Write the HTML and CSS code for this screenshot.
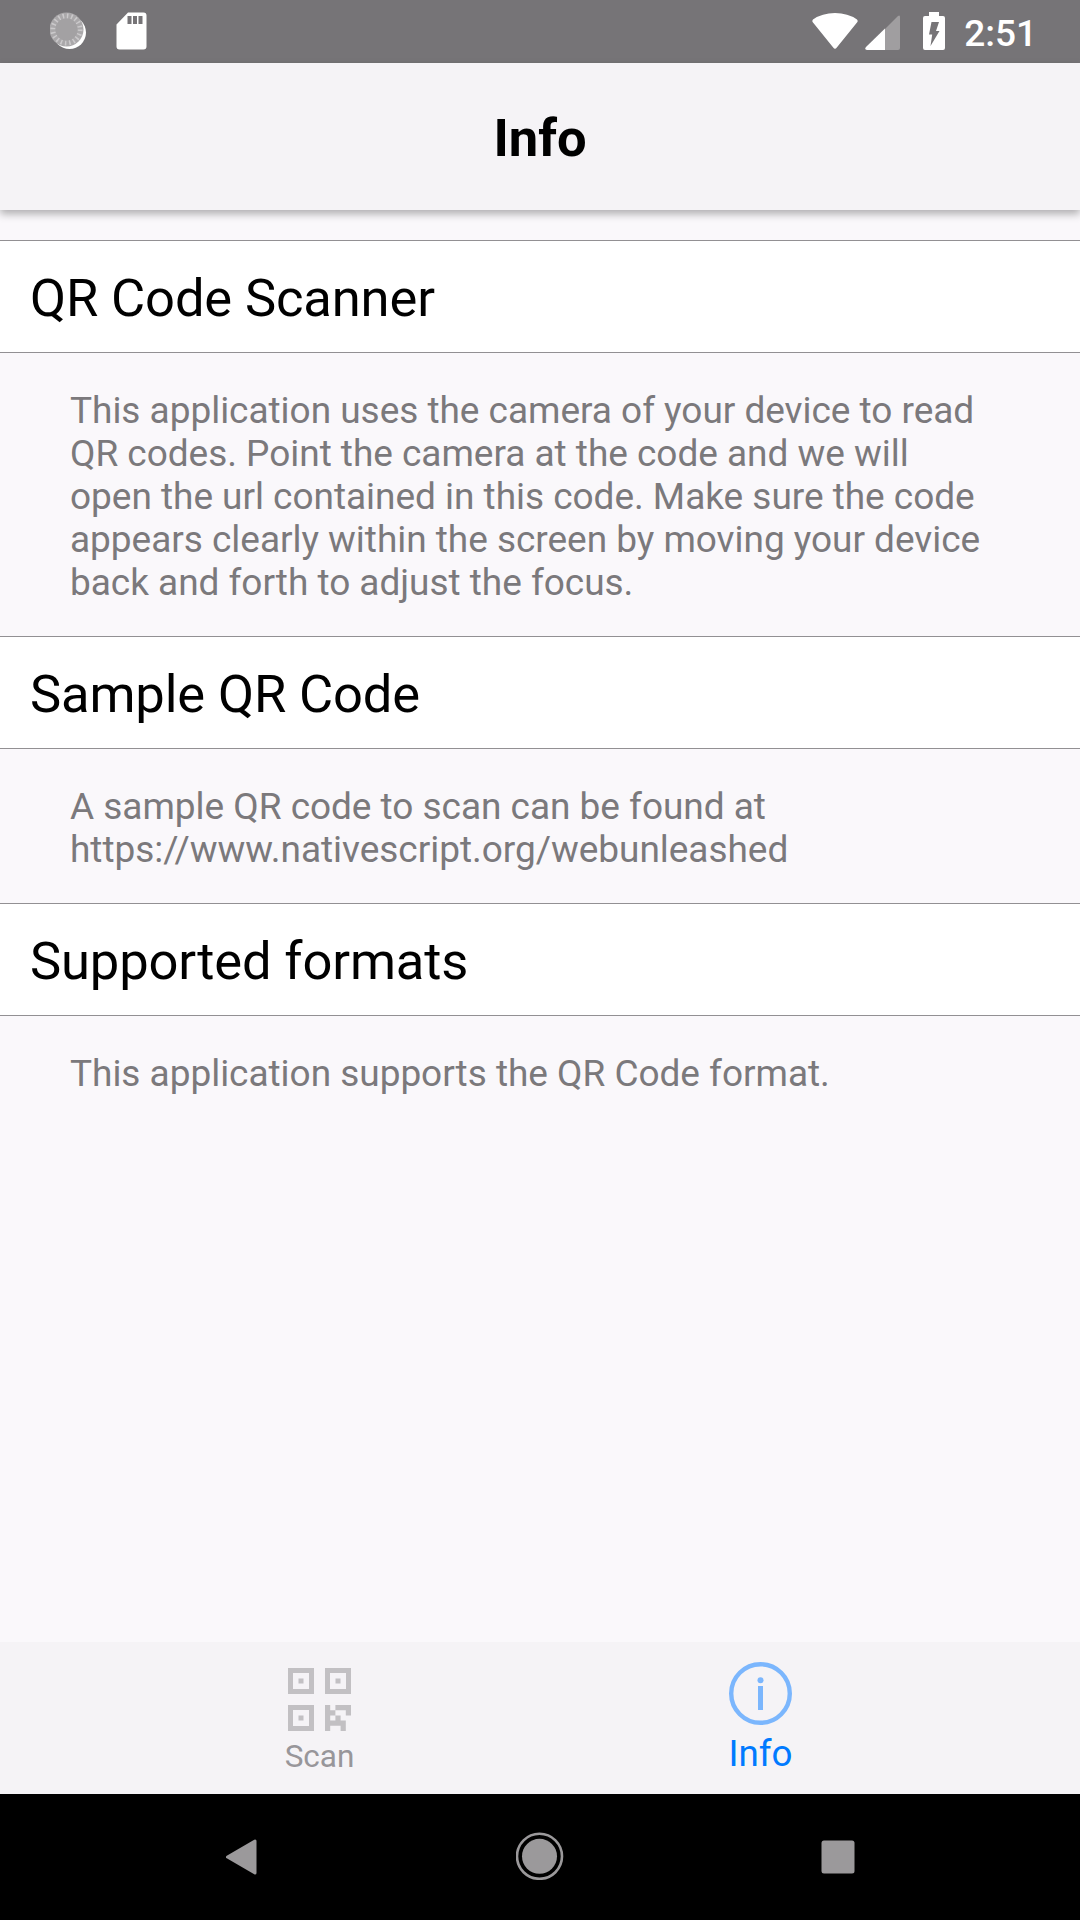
FILE: index.html
```html
<!DOCTYPE html>
<html lang="en">
<head>
  <meta charset="UTF-8">
  <meta name="viewport" content="width=device-width, initial-scale=1.0">
  <title>Info</title>
  <link rel="stylesheet" href="styles.css">
</head>
<body>

<!-- Status bar -->
<div class="status-bar">
  <div class="status-left">
    <svg width="38" height="38" viewBox="0 0 38 38">
      <circle cx="19.500" cy="20.500" r="16.500" fill="#fff"/>
      <circle cx="16.500" cy="17.500" r="17" fill="#aaa8aa"/>
      <circle cx="16.500" cy="17.500" r="13.600" fill="none" stroke="#cbc9cb" stroke-width="5" stroke-dasharray="1.5 2.77"/>
      <circle cx="16.500" cy="17.500" r="11" fill="#a3a1a3"/>
    </svg>
    <svg width="31" height="38" viewBox="0 0 31 38">
      <path d="M12 .5h15.500a3 3 0 0 1 3 3v31a3 3 0 0 1-3 3H3.500a3 3 0 0 1-3-3V12.500z" fill="#fff"/>
      <path d="M11.500 4h4v8h-4zM17 4h4v8h-4zM22.500 4h4v8h-4z" fill="#767477"/>
    </svg>
  </div>
  <div class="status-right">
    <svg class="wifi" width="46" height="38" viewBox="0 0 46 38">
      <path d="M1 7.500Q10 1 23 1t22 6.500q1.200 1.300.2 2.800L24.800 35.500q-1.800 2.400-3.600 0L.8 10.300Q-.2 8.800 1 7.500z" fill="#fff"/>
    </svg>
    <svg class="signal" width="35" height="38" viewBox="0 0 35 38">
      <path d="M20 17L33 4q2-1.500 2 1v31q0 2-2 2H20z" fill="#a09ea0"/>
      <path d="M20 16.500V38H2q-3-.5-1-3z" fill="#fff"/>
    </svg>
    <svg class="battery" width="22" height="38" viewBox="0 0 22 38">
      <path d="M6 0h10v4h4q2 0 2 2v30q0 2-2 2H2q-2 0-2-2V6q0-2 2-2h4z" fill="#fff"/>
      <path d="M8.500 10h7.500l-3 9h3.500L7.500 34l1.700-11.500H6z" fill="#767477"/>
    </svg>
    <span class="clock">2:51</span>
  </div>
</div>

<header class="action-bar">
  <h1>Info</h1>
</header>

<main class="content">
  <h2 class="section-title">QR Code Scanner</h2>
  <p class="section-text">This application uses the camera of your device to read QR codes. Point the camera at the code and we will open the url contained in this code. Make sure the code appears clearly within the screen by moving your device back and forth to adjust the focus.</p>
  <h2 class="section-title">Sample QR Code</h2>
  <p class="section-text">A sample QR code to scan can be found at https://www.nativescript.org/webunleashed</p>
  <h2 class="section-title">Supported formats</h2>
  <p class="section-text">This application supports the QR Code format.</p>
</main>

<!-- Tabs -->
<nav class="tab-bar">
  <a class="tab">
    <svg class="tab-icon" width="63" height="63" viewBox="0 0 63 63">
      <g fill="none" stroke="#c2c0c3" stroke-width="5">
        <path d="M2.500 2.500h21v21h-21zM39.500 2.500h21v21h-21zM2.500 39.500h21v21h-21z"/>
      </g>
      <g fill="#c2c0c3">
        <path d="M10.500 10.500h5v5h-5zM47.500 10.500h5v5h-5zM10.500 47.500h5v5h-5z"/>
        <path d="M37 37h5.200v5.200h5.200v5.200h-5.200v5.200h5.200v-5.200h5.200v5.200h5.200V63h-5.200v-5.200H42.200V63H37zM47.400 37H63v10.400h-5.200v-5.200H47.400z"/>
      </g>
    </svg>
    <span class="tab-label">Scan</span>
  </a>
  <a class="tab active">
    <svg class="tab-icon" width="63" height="63" viewBox="0 0 63 63">
      <circle cx="31.500" cy="31.500" r="29.300" fill="none" stroke="#7bb6fd" stroke-width="4.400"/>
      <circle cx="31.500" cy="18.300" r="3" fill="#7bb6fd"/>
      <path d="M29 24h5v24h-5z" fill="#7bb6fd"/>
    </svg>
    <span class="tab-label">Info</span>
  </a>
</nav>

<!-- System navigation -->
<div class="system-nav">
  <svg width="48" height="48" viewBox="0 0 48 48">
    <path d="M9.500 25L37 9V41z" fill="#9b999b" stroke="#9b999b" stroke-width="3" stroke-linejoin="round"/>
  </svg>
  <svg width="48" height="48" viewBox="0 0 48 48">
    <circle cx="23.500" cy="24.300" r="22.500" fill="none" stroke="#9b999b" stroke-width="2.600"/>
    <circle cx="23.500" cy="24.300" r="17.500" fill="#9b999b"/>
  </svg>
  <svg width="48" height="48" viewBox="0 0 48 48">
    <rect x="7.500" y="8.500" width="33" height="33" rx="2.500" fill="#9b999b"/>
  </svg>
</div>

</body>
</html>
```
FILE: styles.css
```css
* {
  box-sizing: border-box;
}

body {
  margin: 0;
  height: 1920px;
  display: flex;
  flex-direction: column;
  background: #faf8fb;
  font-family: Roboto, sans-serif;
  overflow: hidden;
}

svg {
  display: block;
  flex-shrink: 0;
}

.status-bar {
  height: 63px;
  padding: 0 43px 1px 50px;
  display: flex;
  justify-content: space-between;
  align-items: center;
  background: #767477;
}

.status-left,
.status-right {
  display: flex;
  align-items: center;
}

.status-left {
  gap: 28px;
}

.wifi {
  margin-right: 7px;
}

.signal {
  margin-right: 23px;
}

.battery {
  margin-right: 19px;
}

.clock {
  padding-top: 5px;
  font-size: 37px;
  font-weight: 500;
  line-height: 44px;
  color: #fff;
}

.action-bar {
  height: 147px;
  padding-top: 3px;
  display: flex;
  justify-content: center;
  align-items: center;
  background: #f5f3f6;
  box-shadow: 0 4px 8px rgba(0, 0, 0, 0.3);
}

.action-bar h1 {
  margin: 0;
  font-size: 52.5px;
  font-weight: 700;
}

.content {
  flex: 1;
  padding-top: 30px;
}

.section-title {
  height: 113px;
  margin: 0;
  padding: 4px 30px 0;
  border-top: 1px solid #929093;
  border-bottom: 1px solid #929093;
  background: #fff;
  color: #000;
  font-size: 52.5px;
  font-weight: 400;
  letter-spacing: -0.14px;
  line-height: 106px;
}

.section-text {
  margin: 0;
  padding: 36px 88px 32px 70px;
  color: #7b797c;
  font-size: 37px;
  letter-spacing: -0.03px;
  line-height: 43px;
}

.tab-bar {
  height: 152px;
  display: flex;
  justify-content: center;
  background: #f5f3f6;
}

.tab {
  width: 441px;
  padding-top: 26px;
  display: flex;
  flex-direction: column;
  align-items: center;
  gap: 7px;
  color: #98969a;
  font-size: 31.5px;
  line-height: 38px;
}

.tab.active {
  padding-top: 20px;
  gap: 7px;
  color: #007aff;
  font-size: 36.75px;
  line-height: 43px;
}

.system-nav {
  height: 126px;
  padding-bottom: 2px;
  display: flex;
  justify-content: center;
  align-items: center;
  gap: 250px;
  background: #000;
}
```
